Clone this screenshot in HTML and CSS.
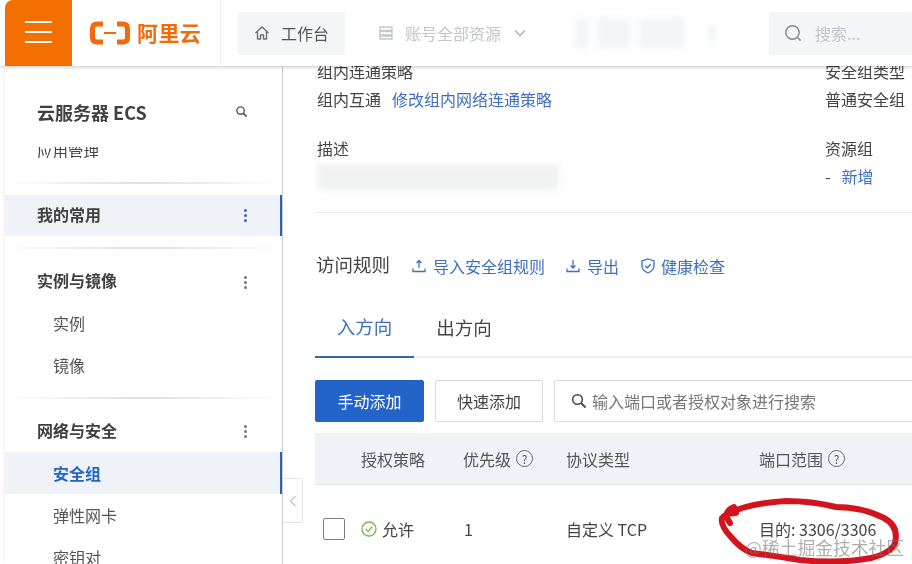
FILE: index.html
```html
<!DOCTYPE html>
<html lang="zh-CN">
<head>
<meta charset="utf-8">
<title>安全组</title>
<link rel="stylesheet" href="styles.css">
</head>
<body>
<div class="page">
  <header class="topbar">
    <button class="burger"><span></span><span></span><span></span></button>
    <div class="brand">
      <svg class="brand-mark" viewBox="0 0 40 24" width="40" height="24"><path d="M13 3H7Q2.500 3 2.500 7.500V16.500Q2.500 21 7 21H13M27 3H33Q37.500 3 37.500 7.500V16.500Q37.500 21 33 21H27" fill="none" stroke="#f26a0a" stroke-width="5" stroke-linejoin="round"/><path d="M14 12H26" stroke="#f26a0a" stroke-width="2"/></svg>
      <span class="brand-name">阿里云</span>
    </div>
    <a class="chip home">
      <svg viewBox="0 0 16 16" width="16" height="16"><path d="M1.500 8 8 2l6.500 6M3.500 7v7h3v-4h3v4h3V7" fill="none" stroke="#6b6f75" stroke-width="1.400" stroke-linejoin="round"/></svg>
      <span>工作台</span>
    </a>
    <div class="account">
      <svg viewBox="0 0 16 16" width="16" height="16"><path d="M2 2h12v3.500H2zM2 6.500h12v3.500H2zM2 11h12v3H2z" fill="none" stroke="#c4c7cb" stroke-width="1.300"/></svg>
      <span>账号全部资源</span>
      <svg class="chev" viewBox="0 0 12 8" width="12" height="8"><path d="M1 1.500 6 6.500l5-5" fill="none" stroke="#b4b7bb" stroke-width="1.600"/></svg>
    </div>
    <div class="smudges"><i></i><i></i><i></i><i></i></div>
    <div class="chip search">
      <svg viewBox="0 0 18 18" width="18" height="18"><circle cx="8.500" cy="8.500" r="6.700" fill="none" stroke="#85898e" stroke-width="1.400"/><path d="m13.500 13.500 3 3" stroke="#85898e" stroke-width="1.400"/></svg>
      <span>搜索...</span>
    </div>
  </header>

  <div class="main">
    <aside class="sidebar">
      <div class="side-title"><span>云服务器 ECS</span>
        <svg viewBox="0 0 14 14" width="13" height="13"><circle cx="6" cy="6" r="4" fill="none" stroke="#555" stroke-width="1.500"/><path d="m9 9 3.500 3.500" stroke="#555" stroke-width="1.800"/></svg>
      </div>
      <div class="peek"><span>应用管理</span></div>
      <div class="rule"></div>
      <div class="group-row active-group"><b>我的常用</b><em class="dots blue"></em></div>
      <div class="rule second"></div>
      <div class="group-row"><b>实例与镜像</b><em class="dots"></em></div>
      <div class="item">实例</div>
      <div class="item">镜像</div>
      <div class="rule third"></div>
      <div class="group-row short"><b>网络与安全</b><em class="dots"></em></div>
      <div class="item current">安全组</div>
      <div class="item">弹性网卡</div>
      <div class="item">密钥对</div>
    </aside>

    <main class="content">
      <section class="info">
        <div class="info-col wide">
          <div class="line">组内连通策略</div>
          <div class="line"><span>组内互通</span><a class="link gap">修改组内网络连通策略</a></div>
          <div class="line label-2">描述</div>
          <div class="blurred"></div>
        </div>
        <div class="info-col narrow">
          <div class="line">安全组类型</div>
          <div class="line">普通安全组</div>
          <div class="line label-2">资源组</div>
          <div class="line"><span>-</span><a class="link add">新增</a></div>
        </div>
      </section>

      <div class="rules-head">
        <h2>访问规则</h2>
        <a class="link tool first">
          <svg viewBox="0 0 14 14" width="14" height="14"><path d="M7 9V1.500M4.500 4 7 1.500 9.500 4M1 9.500v3h12v-3" fill="none" stroke="#3f6fc0" stroke-width="1.300"/></svg>
          <span>导入安全组规则</span></a>
        <a class="link tool">
          <svg viewBox="0 0 14 14" width="14" height="14"><path d="M7 1v8M4.500 6.500 7 9l2.500-2.500M1 9.500v3h12v-3" fill="none" stroke="#3f6fc0" stroke-width="1.300"/></svg>
          <span>导出</span></a>
        <a class="link tool health">
          <svg viewBox="0 0 16 16" width="16" height="16"><path d="M8 1 14 3v5q0 4.500-6 7Q2 12.500 2 8V3z" fill="none" stroke="#3f6fc0" stroke-width="1.300"/><path d="m5.200 7.800 2 2 3.600-3.600" fill="none" stroke="#3f6fc0" stroke-width="1.300"/></svg>
          <span>健康检查</span></a>
      </div>

      <nav class="tabs">
        <a class="tab on">入方向</a>
        <a class="tab">出方向</a>
      </nav>

      <div class="toolbar">
        <button class="btn primary">手动添加</button>
        <button class="btn">快速添加</button>
        <div class="query">
          <svg viewBox="0 0 16 16" width="16" height="16"><circle cx="6.500" cy="6.500" r="4.800" fill="none" stroke="#444" stroke-width="1.500"/><path d="m10 10 4.500 4.500" stroke="#444" stroke-width="1.800"/></svg>
          <span>输入端口或者授权对象进行搜索</span>
        </div>
      </div>

      <div class="thead">
        <div class="c1"></div>
        <div class="c2">授权策略</div>
        <div class="c3">优先级<i class="help">?</i></div>
        <div class="c4">协议类型</div>
        <div class="c5">端口范围<i class="help">?</i></div>
      </div>
      <div class="trow">
        <div class="c1"><span class="check"></span></div>
        <div class="c2 allow">
          <svg viewBox="0 0 16 16" width="16" height="16"><circle cx="8" cy="8" r="7" fill="none" stroke="#7ab648" stroke-width="1.300"/><path d="m4.800 8 2.300 2.400 4-4.600" fill="none" stroke="#7ab648" stroke-width="1.300"/></svg>
          <span>允许</span></div>
        <div class="c3 num">1</div>
        <div class="c4">自定义 TCP</div>
        <div class="c5">目的: 3306/3306</div>
      </div>
    </main>
  </div>

  <button class="collapse"><svg viewBox="0 0 8 12" width="8" height="12"><path d="M6.500 1 1.500 6l5 5" fill="none" stroke="#c2c5c9" stroke-width="1.200"/></svg></button>

  <svg class="ink" viewBox="0 0 912 564" width="912" height="564"><path d="M730 523Q722 512 734 507L736 513Q727 513 722 518Q720 525 731 537Q741 549 752 553Q775 556 800 560Q840 564 871 558Q891 553 895 543Q899 526 884 518Q862 507 836 507Q812 501 786 501Q758 503 742 508Q730 512 724 516" fill="none" stroke="#d3131d" stroke-width="6" stroke-linecap="round" stroke-linejoin="round"/></svg>
  <div class="watermark">@稀土掘金技术社区</div>
</div>
</body>
</html>
```
FILE: styles.css
```css
* { box-sizing: border-box; }
html, body { margin: 0; padding: 0; background: #fff; }
body { font-family: "Noto Sans CJK SC", "Noto Sans", sans-serif; color: #333; font-size: 16px; }
a { text-decoration: none; }
button { font-family: inherit; }

.page { position: relative; width: 912px; height: 564px; overflow: hidden; display: flex; flex-direction: column; filter: blur(0.35px); }

/* top bar */
.topbar { position: relative; z-index: 2; flex: none; height: 66px; padding-left: 5px; display: flex; align-items: center; background: #fff; box-shadow: 0 1px 4px rgba(0,0,0,.22); }
.burger { width: 67px; height: 66px; border: 0; padding: 0 0 2px; background: #f46f02; border-top-left-radius: 8px; display: flex; flex-direction: column; align-items: center; justify-content: center; gap: 7.500px; }
.burger span { width: 27px; height: 2.500px; background: #fff; }
.brand { width: 149px; height: 66px; padding-left: 18px; display: flex; align-items: center; gap: 7px; border-right: 1px solid #eceef0; }
.brand-name { font-size: 21px; line-height: 24px; font-weight: 700; color: #f26a0a; letter-spacing: .4px; margin-top: -2px; }
.chip { height: 43px; background: #f3f5f7; border-radius: 2px; display: flex; align-items: center; }
.home { width: 107px; margin-left: 17px; padding-left: 16px; gap: 11px; color: #555; white-space: nowrap; }
.account { width: 197px; margin-left: 33px; display: flex; align-items: center; gap: 11px; color: #c2c5c9; white-space: nowrap; }
.chev { margin-left: 2px; }
.smudges { width: 194px; display: flex; align-items: center; gap: 8px; filter: blur(3px); }
.smudges i { display: block; height: 30px; background: #f3f5f7; }
.smudges i:nth-child(1) { width: 14px; }
.smudges i:nth-child(2) { width: 34px; }
.smudges i:nth-child(3) { width: 46px; }
.smudges i:nth-child(4) { width: 10px; margin-left: 14px; height: 14px; }
.search { flex: 1; padding-left: 15px; gap: 13px; color: #c2c5c9; white-space: nowrap; }

/* body */
.main { flex: 1; min-height: 0; display: flex; overflow: hidden; }
.sidebar { flex: none; width: 278px; margin-left: 5px; padding-top: 26px; border-right: 1px solid #c9cdd2; box-shadow: -3px 0 4px -2px rgba(0,0,0,.06); }
.side-title { height: 42px; padding: 0 34px 0 32px; display: flex; align-items: center; justify-content: space-between; font-size: 18px; font-weight: 700; color: #404040; white-space: nowrap; }
.side-title span { padding-bottom: 2px; }
.side-title svg { margin-top: -4px; }
.peek { height: 11px; margin-top: 13px; padding-left: 32px; overflow: hidden; font-size: 15.500px; line-height: 22px; color: #444; }
.peek span { display: block; margin-top: -7px; }
.rule { height: 2px; margin: 24px 0 0; background: linear-gradient(90deg, #fff, #dcdee0 50%, #fff); }
.rule.second { margin: 11px 0 0; }
.rule.third { margin: 10px 0 0; }
.group-row { height: 42px; padding: 0 35px 0 32px; display: flex; align-items: center; justify-content: space-between; color: #333; }
.group-row b { font-weight: 700; color: #404040; padding-bottom: 4px; }
.group-row.short { height: 41px; }
.rule + .group-row { margin-top: 12px; }
.active-group { height: 41px; background: #eff3f8; border-right: 2px solid #2f62ad; padding-right: 33px; margin-top: 11px !important; }
.dots, .dots::before, .dots::after { display: block; width: 3px; height: 3px; border-radius: 50%; background: #777; }
.dots { position: relative; }
.dots::before, .dots::after { content: ""; position: absolute; left: 0; }
.dots::before { top: -5px; }
.dots::after { top: 5px; }
.dots.blue, .dots.blue::before, .dots.blue::after { background: #3c68b0; }
.item { height: 42px; padding: 0 0 3px 48px; display: flex; align-items: center; color: #555; }
.item.current { background: #eff3f8; border-right: 2px solid #2f62ad; color: #2264c8; font-weight: 700; padding-bottom: 0; }
.current ~ .item { padding-bottom: 0; }

.content { flex: 1; min-width: 0; padding-left: 32px; }
.info { display: flex; height: 147px; border-bottom: 1px solid #e8eaec; overflow: hidden; }
.info-col { padding-left: 2px; }
.info-col.wide { width: 509px; margin-top: -9px; }
.info-col.narrow { flex: 1; margin-top: -9px; padding-left: 1px; white-space: nowrap; }
.line { height: 28px; line-height: 28px; color: #444; white-space: nowrap; }
.line.label-2 { margin-top: 21px; }
.link { color: #3f6fc0; }
.gap { margin-left: 11px; }
.add { margin-left: 11px; }
.blurred { width: 242px; height: 26px; margin-top: 2px; background: #eceded; opacity: .75; filter: blur(3px); }

.rules-head { height: 40px; margin-top: 31px; display: flex; align-items: center; }
.rules-head h2 { margin: 0 22px 0 1px; font-size: 18.500px; font-weight: 400; color: #444; white-space: nowrap; }
.tool { display: flex; align-items: center; gap: 7px; margin-right: 21px; margin-top: 3px; white-space: nowrap; }
.tool.health { gap: 5px; }
.tabs { height: 71px; margin-top: 3px; display: flex; align-items: stretch; border-bottom: 2px solid #eceef0; padding-top: 9px; }
.tab { width: 99px; margin-bottom: -2px; display: flex; align-items: center; justify-content: center; font-size: 18.500px; color: #444; }
.tab + .tab { width: 56px; margin-left: 22px; }
.tab.on { color: #3f6fc0; border-bottom: 2px solid #2f67b8; }
.toolbar { height: 42px; margin-top: 22px; display: flex; gap: 11px; }
.btn { flex: none; width: 108px; height: 42px; padding: 0; border: 1px solid #d8dadd; border-radius: 2px; background: #fff; color: #444; font-size: 16px; }
.btn.primary { width: 109px; background: #2264c8; border-color: #2264c8; color: #fff; }
.query { flex: 1; height: 42px; padding-left: 16px; border: 1px solid #d8dadd; border-right: 0; border-radius: 2px 0 0 2px; display: flex; align-items: center; gap: 5px; color: #777; white-space: nowrap; }

.thead, .trow { width: 597px; display: grid; grid-template-columns: 46px 102px 103px 193px 153px; }
.thead { height: 52px; margin-top: 11px; background: #eff3f8; border-bottom: 1px solid #dfe2e6; align-items: center; color: #555; }
.thead > div { display: flex; align-items: center; white-space: nowrap; }
.help { width: 17px; height: 17px; margin-left: 5px; border: 1px solid #666; border-radius: 50%; font-style: normal; font-size: 12px; line-height: 15px; text-align: center; color: #555; }
.trow { height: 88px; align-items: center; color: #444; white-space: nowrap; }
.c1 { padding-left: 8px; }
.check { display: block; width: 22px; height: 22px; border: 1px solid #7c7f83; border-radius: 2px; }
.allow { display: flex; align-items: center; gap: 5px; }
.num { padding-left: 1px; }

.collapse { position: absolute; left: 283px; top: 478px; width: 20px; height: 45px; padding: 0; border: 1px solid #e3e5e8; border-left: 0; border-radius: 0 2px 2px 0; background: #fff; display: flex; align-items: center; justify-content: center; }
.ink { position: absolute; left: 0; top: 0; pointer-events: none; }
.watermark { position: absolute; left: 745px; top: 535px; font-size: 17.800px; line-height: 24px; color: rgba(120,120,120,.6); white-space: nowrap; }
```
